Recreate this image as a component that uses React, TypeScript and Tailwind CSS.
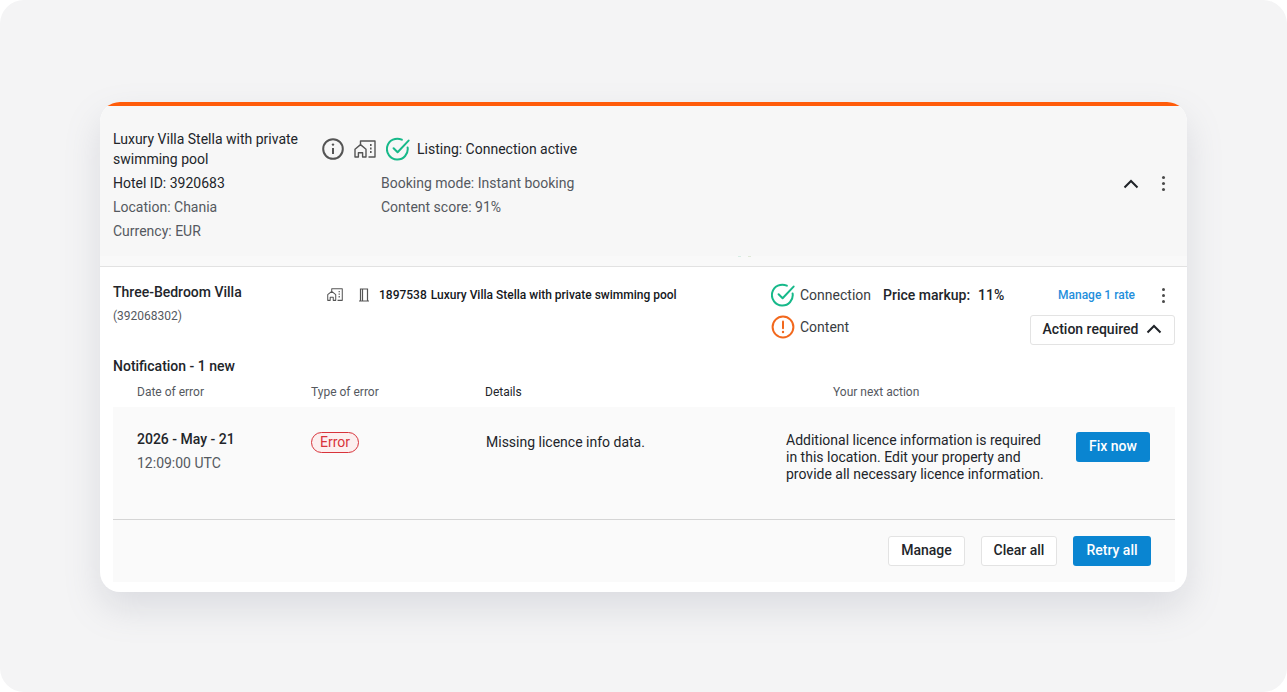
const roboto = "font-['Roboto',sans-serif]";

function InfoIcon() {
  return (
    <svg width="22" height="22" viewBox="0 0 22 22" fill="none" stroke="#555555" strokeWidth="2">
      <circle cx="11" cy="11" r="9.8" />
      <path d="M11 10v6" />
      <circle cx="11" cy="6.6" r="1.2" fill="#555555" stroke="none" />
    </svg>
  );
}

function BuildingIcon({ size = 22, color = "#555555" }: { size?: number; color?: string }) {
  return (
    <svg width={size} height={size * 0.82} viewBox="0 0 22 18" fill="none" stroke={color} strokeWidth="1.4" strokeLinejoin="round">
      <path d="M1 9.2 6.5 4.6 12 9.2V17H8.6v-4.2H4.4V17H1z" />
      <path d="M6.5 4.2V1H21v16h-6.5" />
      <path d="M16 5h1.6M16 8.5h1.6M16 12h1.6" strokeWidth="1.8" />
    </svg>
  );
}

function DoorIcon() {
  return (
    <svg width="12" height="14" viewBox="0 0 12 14" fill="none" stroke="#555555" strokeWidth="1.2">
      <path d="M1 13h10M2.5 13V1h7v12M4.5 1v12" />
    </svg>
  );
}

function CheckIcon() {
  return (
    <svg width="24" height="24" viewBox="0 0 24 24" fill="none" stroke="#17b98a" strokeWidth="2" strokeLinecap="round" strokeLinejoin="round">
      <path d="M21.6 10.4A10.4 10.4 0 1 1 15.8 2.7" />
      <path d="M7.6 11.2l4 4L22.6 3.6" />
    </svg>
  );
}

function WarnIcon() {
  return (
    <svg width="24" height="24" viewBox="0 0 24 24" fill="none" stroke="#f2681d" strokeWidth="2" strokeLinecap="round">
      <circle cx="12" cy="12" r="10.4" />
      <path d="M12 6.6v6.6" />
      <circle cx="12" cy="17" r="1.2" fill="#f2681d" stroke="none" />
    </svg>
  );
}

function Chevron() {
  return (
    <svg width="16" height="10" viewBox="0 0 16 10" fill="none" stroke="#1f2328" strokeWidth="2">
      <path d="M1.5 8.5 8 2l6.5 6.5" />
    </svg>
  );
}

function Dots() {
  return (
    <div className="flex flex-col gap-[3px]">
      <span className="w-[3px] h-[3px] rounded-full bg-[#4a4a4a]" />
      <span className="w-[3px] h-[3px] rounded-full bg-[#4a4a4a]" />
      <span className="w-[3px] h-[3px] rounded-full bg-[#4a4a4a]" />
    </div>
  );
}

function OutlineButton({ label, width }: { label: string; width: string }) {
  return (
    <button className={`${width} h-[30px] rounded-[3px] border border-[#e3e3e3] bg-white pb-0.5 text-[14px] font-medium text-[#22252a]`}>
      {label}
    </button>
  );
}

export default function App() {
  return (
    <div className="bg-white">
      <div className={`${roboto} h-[692px] overflow-hidden rounded-[24px] bg-[#f4f4f5] px-[100px] pt-[102px]`}>
        <div className="h-[490px] overflow-hidden rounded-[20px] bg-white shadow-[0_16px_36px_rgba(120,125,145,0.2)]">
          <div className="h-1 bg-[#ff5c0a]" />

          {/* listing header */}
          <div className="h-[150px] bg-[#f7f7f7] flex items-start pl-[13px] pr-[22px] pt-[23px] text-[14px] leading-5">
            <div className="w-[209px] shrink-0">
              <p className="text-[#22252a]">Luxury Villa Stella with private swimming pool</p>
              <p className="mt-1 text-[#22252a]">Hotel ID: 3920683</p>
              <p className="mt-1 text-[#55595f]">Location: Chania</p>
              <p className="mt-1 text-[#55595f]">Currency: EUR</p>
            </div>
            <div className="flex-1">
              <div className="flex items-center h-5 mt-[10px]">
                <InfoIcon />
                <span className="ml-[10px]"><BuildingIcon /></span>
                <span className="ml-[10px]"><CheckIcon /></span>
                <span className="ml-[7px] text-[#22252a]">Listing: Connection active</span>
              </div>
              <p className="ml-[59px] mt-[14px] text-[#55595f]">Booking mode: Instant booking</p>
              <p className="ml-[59px] mt-1 text-[#55595f]">Content score: 91%</p>
            </div>
            <div className="flex items-center gap-[23px] mt-[47px]">
              <Chevron />
              <Dots />
            </div>
          </div>
          <div className="h-[11px] bg-[#f9f9f9] border-b border-[#e2e2e2] flex justify-center gap-[7px] pl-[202px]">
            <span className="w-[3px] h-px bg-[#d6ece4]" />
            <span className="w-[3px] h-px bg-[#dfe8d8]" />
          </div>

          {/* room row */}
          <div className="flex items-start pl-[13px] pr-3 pt-[15px] h-[91px]">
            <div className="w-[214px] shrink-0">
              <p className="text-[14px] leading-5 font-medium text-[#22252a]">Three-Bedroom Villa</p>
              <p className="mt-[4px] text-[12px] leading-5 text-[#55595f]">(392068302)</p>
            </div>
            <div className="w-[444px] shrink-0 flex items-center h-6 mt-px text-[12px] font-medium text-[#15181c]">
              <BuildingIcon size={16} />
              <span className="ml-[15px]"><DoorIcon /></span>
              <span className="ml-[9px]">1897538</span>
              <span className="ml-1">Luxury Villa Stella with private swimming pool</span>
            </div>
            <div className="w-[112px] shrink-0 mt-px text-[14px] text-[#3a3d42]">
              <div className="flex items-center gap-[5px] h-6"><CheckIcon /> Connection</div>
              <div className="flex items-center gap-[5px] h-6 mt-2"><WarnIcon /> Content</div>
            </div>
            <div className="flex-1 mt-px">
              <div className="flex items-center h-6">
                <span className="text-[14px] font-medium text-[#22252a] w-[175px]">Price markup:<span className="ml-[8px]">11%</span></span>
                <span className="text-[12px] font-medium text-[#1f8fdc] w-[105px]">Manage 1 rate</span>
                <span className="-ml-px"><Dots /></span>
              </div>
              <div className="flex justify-end mt-[8px]">
                <button className="flex h-[30px] w-[145px] items-center justify-center gap-[8px] rounded-[3px] border border-[#e3e3e3] bg-white pb-0.5 text-[14px] font-medium text-[#22252a]">
                  Action required <Chevron />
                </button>
              </div>
            </div>
          </div>

          {/* notifications */}
          <div className="pl-[13px] pr-3">
            <p className="text-[14px] leading-5 font-medium text-[#22252a] -mt-[2px]">Notification - 1 new</p>
            <div className="grid grid-cols-[174px_174px_348px_1fr] pl-6 mt-[6px] h-[20px] text-[12px] leading-5 text-[#55595f]">
              <span>Date of error</span>
              <span>Type of error</span>
              <span className="text-[#22252a]">Details</span>
              <span>Your next action</span>
            </div>
            <div className="mt-[5px] h-[113px] bg-[#fafafa] border-b border-[#d5d5d5] flex items-start pl-6 pt-[22px] text-[14px] leading-[17px]">
              <div className="w-[174px] shrink-0">
                <p className="font-medium text-[#22252a] leading-5">2026 - May - 21</p>
                <p className="mt-1 text-[#55595f] leading-5">12:09:00 UTC</p>
              </div>
              <div className="w-[175px] shrink-0 mt-[3px]">
                <span className="inline-block w-[48px] h-[21px] rounded-full border border-[#d8333a] bg-[#fcefef] text-center text-[14px] leading-[18px] text-[#d8333a]">Error</span>
              </div>
              <p className="w-[300px] shrink-0 mt-[5px] text-[#22252a]">Missing licence info data.</p>
              <p className="w-[268px] shrink-0 mt-[3px] text-[#22252a]">Additional licence information is required in this location. Edit your property and provide all necessary licence information.</p>
              <button className="ml-[22px] mt-[3px] h-[30px] w-[74px] shrink-0 rounded-[3px] bg-[#0a85d1] pb-0.5 text-[14px] font-medium text-white">Fix now</button>
            </div>
            <div className="h-[62px] bg-[#fafafa] flex items-center justify-end gap-4 pr-6">
              <OutlineButton label="Manage" width="w-[77px]" />
              <OutlineButton label="Clear all" width="w-[76px]" />
              <button className="h-[30px] w-[78px] rounded-[3px] bg-[#0a85d1] pb-0.5 text-[14px] font-medium text-white">Retry all</button>
            </div>
          </div>
        </div>
      </div>
    </div>
  );
}
